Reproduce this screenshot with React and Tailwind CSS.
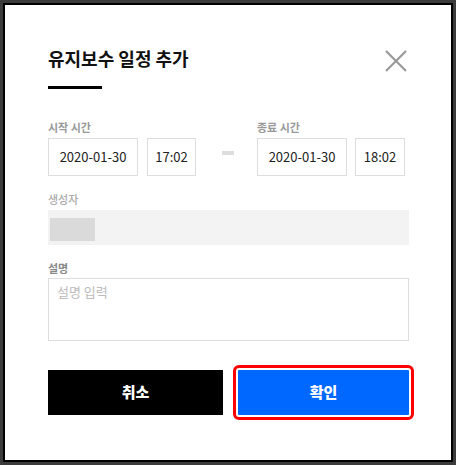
import { useState } from "react";

const font = { fontFamily: '"Noto Sans CJK KR", "Noto Sans", sans-serif' };

function DateBox({ value, w }) {
  return (
    <div className={`${w} h-[38px] border border-[#dddddd] flex items-center justify-center text-[13px] text-[#222]`}>
      {value}
    </div>
  );
}

export default function App() {
  const [memo, setMemo] = useState("");

  return (
    <div style={font} className="w-[456px] h-[465px] bg-[#3c3c3c] p-[3px]">
      <div className="h-full bg-white border-2 border-black pl-[43px] pr-[42px] pt-[40px]">
        {/* header */}
        <div className="flex justify-between items-start">
          <div>
            <h1 className="text-[18px] font-bold text-[#111] leading-[26px]">유지보수 일정 추가</h1>
            <div className="w-[54px] h-[3px] bg-black mt-[15px]"></div>
          </div>
          <button className="mt-[5px] mr-[2px]">
            <svg width="22" height="22" viewBox="0 0 22 22">
              <path d="M1 1 L21 21 M21 1 L1 21" stroke="#999" strokeWidth="2.2" />
            </svg>
          </button>
        </div>

        {/* time */}
        <div className="flex mt-[30px]">
          <div>
            <label className="block text-[11px] font-bold text-[#999] leading-[16px]">시작 시간</label>
            <div className="flex gap-[9px] mt-[3px]">
              <DateBox value="2020-01-30" w="w-[90px]" />
              <DateBox value="17:02" w="w-[49px]" />
            </div>
          </div>
          <div className="w-[61px] flex justify-center pt-[32px]">
            <div className="w-[12px] h-[4px] bg-[#dddddd] ml-[3px]"></div>
          </div>
          <div>
            <label className="block text-[11px] font-bold text-[#999] leading-[16px]">종료 시간</label>
            <div className="flex gap-[8px] mt-[3px]">
              <DateBox value="2020-01-30" w="w-[90px]" />
              <DateBox value="18:02" w="w-[50px]" />
            </div>
          </div>
        </div>

        {/* writer */}
        <label className="block text-[11px] font-medium text-[#aaa] leading-[16px] mt-[15px]">생성자</label>
        <div className="h-[35px] bg-[#f3f3f3] mt-[3px] pl-[2px] pt-[8px]">
          <div className="w-[45px] h-[23px] bg-[#dadada]"></div>
        </div>

        {/* memo */}
        <label className="block text-[11px] font-bold text-[#888] leading-[16px] mt-[15px]">설명</label>
        <textarea
          value={memo}
          onChange={e => setMemo(e.target.value)}
          placeholder="설명 입력"
          className="block w-full h-[63px] mt-[2px] border border-[#dddddd] resize-none px-[8px] py-[3px] text-[13px] placeholder:text-[#bbb] outline-none"
        />

        {/* buttons */}
        <div className="flex justify-between mt-[29px]">
          <button className="w-[175px] h-[45px] bg-black text-white text-[15px] font-black">취소</button>
          <button className="w-[171px] h-[45px] bg-[#0068ff] text-white text-[15px] font-black rounded-[1px] outline-[3px] outline-solid outline-[#ff0000] outline-offset-[2px]">확인</button>
        </div>
      </div>
    </div>
  );
}
